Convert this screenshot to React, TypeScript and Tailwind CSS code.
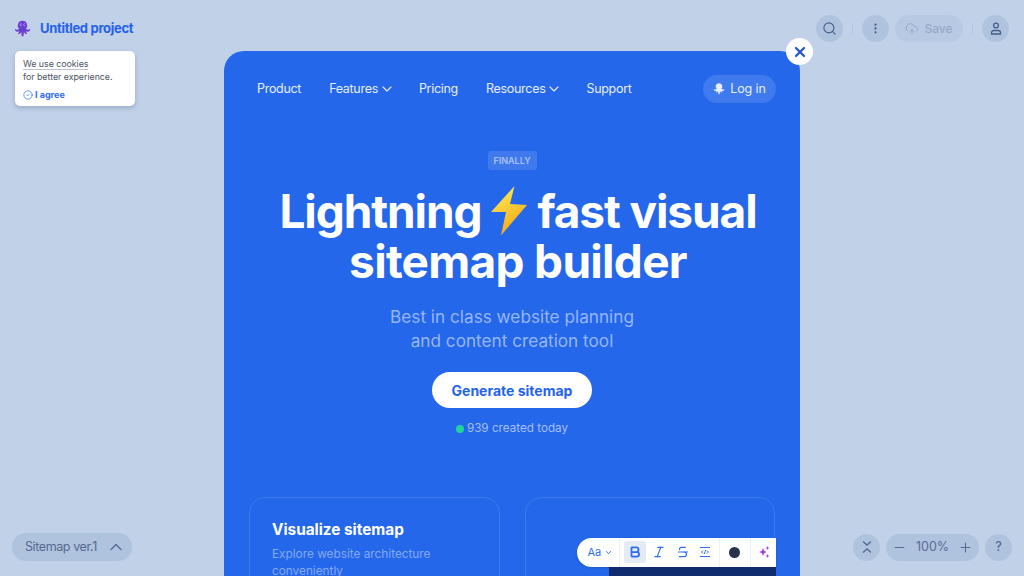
import React from 'react';
import { ChevronDown, ChevronUp, Search, MoreVertical, CloudUpload, X, CircleCheck, Minus, Plus, Bold, Italic, Strikethrough } from 'lucide-react';

const Octopus: React.FC<{ className?: string; eyes?: boolean }> = ({ className, eyes }) => (
  <svg viewBox="0 0 18 18" className={className}>
    <g fill="currentColor">
      <path d="M9 .3c2.900 0 5 2.100 5 4.900 0 1.500-.5 2.700-1.300 3.600.5.700 1.200 1 2 1 .6 0 1.100-.2 1.500-.6.500-.4 1.200.1.900.8-.6 1.100-1.700 1.900-3.100 1.900-.6 0-1.100-.1-1.600-.4.200.7.600 1.300 1.200 1.800.6.500.1 1.300-.6 1.100-1.100-.3-2-1.100-2.500-2.100-.1 1.400-.2 2.600-.4 3.700-.1.600-.5.900-1 .9s-.9-.3-1-.9c-.2-1.100-.3-2.300-.4-3.700-.5 1-1.400 1.800-2.500 2.100-.7.200-1.200-.6-.6-1.100.6-.5 1-1.100 1.200-1.800-.5.300-1 .4-1.600.4-1.400 0-2.500-.8-3.100-1.900-.3-.7.400-1.200.9-.8.4.400.900.6 1.500.6.800 0 1.500-.3 2-1C4.500 7.900 4 6.700 4 5.200 4 2.400 6.100.3 9 .3z" />
    </g>
    {eyes && (
      <g fill="none" stroke="#b79cf0" strokeWidth="0.8">
        <path d="M8.200 3.700a1.100 1.100 0 1 0 0 1.600M12 3.700a1.100 1.100 0 1 0 0 1.600" />
      </g>
    )}
  </svg>
);

const Bolt = () => (
  <svg viewBox="0 0 38 50" className="w-[38px] h-[50px] shrink-0">
    <defs>
      <linearGradient id="bolt" x1="0.3" y1="0" x2="0.7" y2="1">
        <stop offset="0" stopColor="#fde95a" />
        <stop offset="1" stopColor="#f4a30c" />
      </linearGradient>
    </defs>
    <path d="M24.500 0 L1 26 L16 26 L11 49.500 L37 19 L20 18 Z" fill="url(#bolt)" />
  </svg>
);

const RoundButton: React.FC<{ children: React.ReactNode }> = ({ children }) => (
  <div className="w-[27px] h-[27px] rounded-full bg-[#b0c3de] flex items-center justify-center text-[#465e8a]">{children}</div>
);

const Divider = () => <div className="w-px h-3 bg-[#b4c6df] mx-[9px]" />;

export default function App() {
  return (
    <div className="relative w-[1024px] h-[576px] overflow-hidden bg-[#c0d1e8] font-['Inter',sans-serif] flex flex-col justify-between">
      {/* top bar */}
      <div className="flex justify-between items-start pl-[14px] pr-[15px] pt-[15px]">
        <div className="flex flex-col">
          <div className="flex items-center gap-[9px] h-[27px]">
            <Octopus eyes className="w-[17px] h-[18px] text-[#6d3fd1]" />
            <span className="mt-[1px] text-[13px] font-bold text-[#2563eb] tracking-[-0.3px]">Untitled project</span>
          </div>
          <div className="mt-[9px] ml-px w-[120px] h-[55px] bg-white rounded-[5px] shadow-[0_2px_5px_rgba(60,80,120,0.3)] pl-[8px] pt-[6px]">
            <div className="text-[8.9px] leading-[13px] text-[#4b5563] tracking-[-0.05px]">
              <span className="border-b border-[#b8c2d0]">We use cookies</span>
              <div>for better experience.</div>
            </div>
            <div className="flex items-center gap-[2px] mt-[5px] text-[#2f6df0]">
              <CircleCheck size={10} strokeWidth={1.7} />
              <span className="text-[9px] font-bold">I agree</span>
            </div>
          </div>
        </div>
        <div className="flex items-center">
          <RoundButton><Search size={15} strokeWidth={1.8} /></RoundButton>
          <Divider />
          <RoundButton><MoreVertical size={13} strokeWidth={2.2} /></RoundButton>
          <div className="ml-[6px] w-[68px] h-[27px] rounded-full bg-[#b8cae3] flex items-center justify-center gap-[5px] text-[#94a9c9]">
            <CloudUpload size={14} strokeWidth={1.7} />
            <span className="text-[12px] font-medium">Save</span>
          </div>
          <Divider />
          <RoundButton>
            <svg viewBox="0 0 12 13" className="w-[12px] h-[13px]" fill="none" stroke="currentColor" strokeWidth="1.3">
              <circle cx="6" cy="3.500" r="2.400" />
              <path d="M1.500 12h9v-1.200c0-1.300-1-2.300-2.300-2.300H3.800c-1.300 0-2.300 1-2.300 2.300z" />
            </svg>
          </RoundButton>
        </div>
      </div>

      {/* bottom bar */}
      <div className="flex justify-between items-center pl-[12px] pr-[12px] pb-[15px]">
        <div className="w-[120px] h-[28px] rounded-full bg-[#b0c3de] flex items-center pl-[13px] gap-[9px] text-[#54698f]">
          <span className="text-[12.5px] tracking-[-0.4px]">Sitemap ver.1</span>
          <ChevronUp size={20} strokeWidth={1.5} />
        </div>
        <div className="flex items-center gap-[6px] text-[#566c94]">
          <div className="w-[27px] h-[27px] rounded-full bg-[#b0c3de] flex items-center justify-center">
            <svg viewBox="0 0 12 14" className="w-[12px] h-[14px]" fill="none" stroke="currentColor" strokeWidth="1.4">
              <path d="M2 1.500 6 5 10 1.500M2 12.500 6 9 10 12.500" />
            </svg>
          </div>
          <div className="w-[93px] h-[27px] rounded-full bg-[#b0c3de] flex items-center justify-between px-[6px]">
            <Minus size={15} strokeWidth={1.7} />
            <span className="text-[12.5px]">100%</span>
            <Plus size={15} strokeWidth={1.7} />
          </div>
          <div className="w-[27px] h-[27px] rounded-full bg-[#b0c3de] flex items-center justify-center text-[12.5px] font-medium">?</div>
        </div>
      </div>

      {/* modal */}
      <div className="absolute left-[224px] top-[51px] w-[576px] h-[560px] rounded-t-[20px] bg-[#2467ea] text-white flex flex-col items-center">
        <nav className="w-full flex items-center justify-between pl-[33px] pr-[24px] pt-[24px] text-[12.5px] text-[#e6eefd] tracking-[-0.3px]">
          <div className="flex items-center gap-[28px]">
            <span>Product</span>
            <span className="flex items-center">Features <ChevronDown size={16} strokeWidth={1.7} className="ml-[1px] -mr-[4px]" /></span>
            <span>Pricing</span>
            <span className="flex items-center">Resources <ChevronDown size={16} strokeWidth={1.7} className="ml-[1px] -mr-[4px]" /></span>
            <span>Support</span>
          </div>
          <div className="w-[73px] h-[28px] rounded-full bg-[#3f7bee] flex items-center justify-center gap-[5px] text-[12.5px] tracking-[-0.1px]">
            <Octopus className="w-[12px] h-[12px] text-[#e6eefd]" />
            <span>Log in</span>
          </div>
        </nav>

        <div className="mt-[48px] h-[19px] w-[49px] rounded-[3px] bg-[#4079ee] flex items-center justify-center text-[9px] font-semibold text-[#a7c2f7]">FINALLY</div>

        <h1 className="mt-[16px] ml-[12px] text-[46px] leading-[50px] font-bold text-center">
          <span className="flex items-center justify-center gap-[9px] tracking-[-1.1px]">Lightning <Bolt /> fast visual</span>
          <span className="block tracking-[-0.7px]">sitemap builder</span>
        </h1>

        <p className="mt-[19px] text-[17.2px] leading-[24px] text-[#96b6f6] text-center">
          Best in class website planning<br />and content creation tool
        </p>

        <div className="mt-[19px] w-[160px] h-[36px] rounded-full bg-white flex items-center justify-center text-[14px] font-bold text-[#2563eb]">Generate sitemap</div>

        <div className="mt-[12px] flex items-center gap-[3px] text-[11.7px] text-[#a4bff7]">
          <span className="w-2 h-2 rounded-full bg-[#1fd49a]" />
          939 created today
        </div>

        <div className="w-full mt-[59px] pl-[25px] pr-[25px] flex gap-[25px]">
          <div className="w-[251px] h-[100px] rounded-[16px] border border-[#3e7aee] pl-[22px] pt-[23px]">
            <div className="text-[15.3px] leading-[18px] font-bold">Visualize sitemap</div>
            <div className="mt-[7px] text-[11.8px] leading-[17px] text-[#86a9f4]">Explore website architecture<br />conveniently</div>
          </div>
          <div className="relative w-[251px] h-[100px] rounded-[16px] border border-[#3e7aee] overflow-visible">
            <div className="absolute left-[83px] top-[69px] w-[167px] h-[40px] bg-[#0f2d6e]" />
            <div className="absolute left-[51px] top-[40px] w-[199px] h-[29px] bg-white rounded-l-full flex items-center shadow-[0_1px_3px_rgba(20,40,90,0.25)] text-[#2f6df0]">
              <div className="flex items-center gap-[3px] pl-[11px] w-[43px] h-full border-r border-[#eef1f6]">
                <span className="text-[11px]">Aa</span>
                <ChevronDown size={9} strokeWidth={2.4} />
              </div>
              <div className="flex items-center gap-[2px] px-[4px] h-full border-r border-[#eef1f6] w-[100px]">
                <div className="w-[22px] h-[22px] shrink-0 bg-[#e4ebf4] rounded-[3px] flex items-center justify-center"><Bold size={14} strokeWidth={3} /></div>
                <div className="w-[22px] shrink-0 flex justify-center"><Italic size={14} strokeWidth={2} /></div>
                <div className="w-[22px] shrink-0 flex justify-center"><Strikethrough size={14} strokeWidth={2} /></div>
                <div className="w-[19px] shrink-0 flex justify-center">
                  <svg viewBox="0 0 12 12" className="w-3 h-3" fill="none" stroke="currentColor" strokeWidth="1">
                    <path d="M1 1.500h10M1 10.500h10M4 4.500 2.500 6 4 7.500M8 4.500 9.500 6 8 7.500M6.700 4l-1.400 4" />
                  </svg>
                </div>
              </div>
              <div className="w-[31px] h-full flex items-center justify-center border-r border-[#eef1f6]">
                <span className="w-[11px] h-[11px] rounded-full bg-[#27344f]" />
              </div>
              <div className="flex-1 flex justify-center pl-[1px] text-[#a03de0]">
                <svg viewBox="0 0 12 12" className="w-3 h-3" fill="currentColor">
                  <path d="M5 2 6.200 5 9 6 6.200 7 5 10 3.800 7 1 6l2.800-1zM9.500 0l.6 1.400 1.400.6-1.400.6-.6 1.400-.6-1.400L7.500 2l1.400-.6zM9.500 8l.6 1.400 1.400.6-1.400.6-.6 1.400-.6-1.400-1.400-.6 1.400-.6z" />
                </svg>
              </div>
            </div>
          </div>
        </div>
      </div>

      {/* close button */}
      <div className="absolute left-[786px] top-[38px] w-[27px] h-[27px] rounded-full bg-white flex items-center justify-center text-[#2458c8]">
        <X size={16} strokeWidth={3.4} />
      </div>
    </div>
  );
}
